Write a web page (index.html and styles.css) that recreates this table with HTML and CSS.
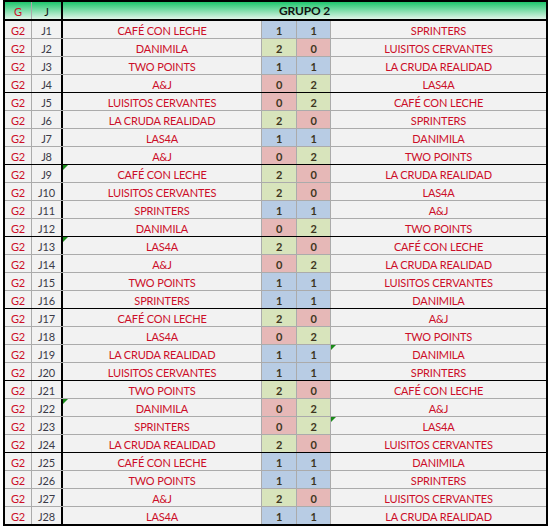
FILE: index.html
```html
<!DOCTYPE html>
<html>
<head>
<meta charset="utf-8">
<link rel="stylesheet" href="styles.css">
</head>
<body>
<div class="sheet">
  <div class="row head">
    <div class="c g">G</div>
    <div class="c j hj">J</div>
    <div class="c title">GRUPO 2</div>
  </div>
  <div id="rows"></div>
</div>
<script src="app.js"></script>
</body>
</html>
```

FILE: styles.css
```css
* { box-sizing: border-box; }
html, body { margin: 0; padding: 0; background: #ffffff; }
body { padding: 0 0 0 3px; }
.sheet {
  width: 545px;
  border: 2px solid #000;
  font-family: Lato, "Open Sans", sans-serif;
  font-size: 11px;
  letter-spacing: -0.15px;
}
.row {
  display: grid;
  grid-template-columns: 27px 31px 199px 35px 34px 1fr;
  height: 18px;
  border-bottom: 1px solid #ababab;
  background: #f2f2f2;
}
.row.end { border-bottom: 1px solid #000; }
.row.last { border-bottom: none; height: 17px; }
.row.head {
  grid-template-columns: 27px 31px 1fr;
  height: 19px;
  border-bottom: 2px solid #000;
  background: linear-gradient(#1ec66c, #dff5e8);
}
.c {
  display: flex;
  align-items: center;
  justify-content: center;
  white-space: nowrap;
  position: relative;
  line-height: 1;
  padding-top: 1px;
}
.g { color: #cc0e28; border-right: 1px solid #ababab; }
.j { color: #3b3b48; border-right: 2px solid #000; }
.hj { color: #111; }
.title { font-weight: bold; color: #111; font-size: 12px; }
.team { color: #cc0e28; border-right: 1px solid #ababab; }
.team.r { border-right: none; }
.s { color: #3d3520; border-right: 1px solid #ababab; font-weight: bold; }
.s1 { background: #b8cce4; }
.s2 { background: #d8e4bc; }
.s0 { background: #e6b8b7; }
.flag::before {
  content: "";
  position: absolute;
  left: 0;
  top: 0;
  border-top: 5px solid #1a8a1a;
  border-right: 5px solid transparent;
}
```

FILE: app.js
```js
const data = [
  ["CAFÉ CON LECHE",1,1,"SPRINTERS"],
  ["DANIMILA",2,0,"LUISITOS CERVANTES"],
  ["TWO POINTS",1,1,"LA CRUDA REALIDAD"],
  ["A&J",0,2,"LAS4A"],
  ["LUISITOS CERVANTES",0,2,"CAFÉ CON LECHE"],
  ["LA CRUDA REALIDAD",2,0,"SPRINTERS"],
  ["LAS4A",1,1,"DANIMILA"],
  ["A&J",0,2,"TWO POINTS"],
  ["CAFÉ CON LECHE",2,0,"LA CRUDA REALIDAD"],
  ["LUISITOS CERVANTES",2,0,"LAS4A"],
  ["SPRINTERS",1,1,"A&J"],
  ["DANIMILA",0,2,"TWO POINTS"],
  ["LAS4A",2,0,"CAFÉ CON LECHE"],
  ["A&J",0,2,"LA CRUDA REALIDAD"],
  ["TWO POINTS",1,1,"LUISITOS CERVANTES"],
  ["SPRINTERS",1,1,"DANIMILA"],
  ["CAFÉ CON LECHE",2,0,"A&J"],
  ["LAS4A",0,2,"TWO POINTS"],
  ["LA CRUDA REALIDAD",1,1,"DANIMILA"],
  ["LUISITOS CERVANTES",1,1,"SPRINTERS"],
  ["TWO POINTS",2,0,"CAFÉ CON LECHE"],
  ["DANIMILA",0,2,"A&J"],
  ["SPRINTERS",0,2,"LAS4A"],
  ["LA CRUDA REALIDAD",2,0,"LUISITOS CERVANTES"],
  ["CAFÉ CON LECHE",1,1,"DANIMILA"],
  ["TWO POINTS",1,1,"SPRINTERS"],
  ["A&J",2,0,"LUISITOS CERVANTES"],
  ["LAS4A",1,1,"LA CRUDA REALIDAD"]
];
const flagsL = [9, 13, 22];
const flagsR = [19, 23];
const host = document.getElementById("rows");
data.forEach((d, i) => {
  const n = i + 1;
  const row = document.createElement("div");
  row.className = "row" + (n === 28 ? " last" : (n % 4 === 0 ? " end" : ""));
  const cells = [
    ["c g", "G2"],
    ["c j", "J" + n],
    ["c team" + (flagsL.includes(n) ? " flag" : ""), d[0]],
    ["c s s" + d[1], String(d[1])],
    ["c s s" + d[2], String(d[2])],
    ["c team r" + (flagsR.includes(n) ? " flag" : ""), d[3]]
  ];
  cells.forEach(([cls, txt]) => {
    const el = document.createElement("div");
    el.className = cls;
    el.textContent = txt;
    row.appendChild(el);
  });
  host.appendChild(row);
});
```
